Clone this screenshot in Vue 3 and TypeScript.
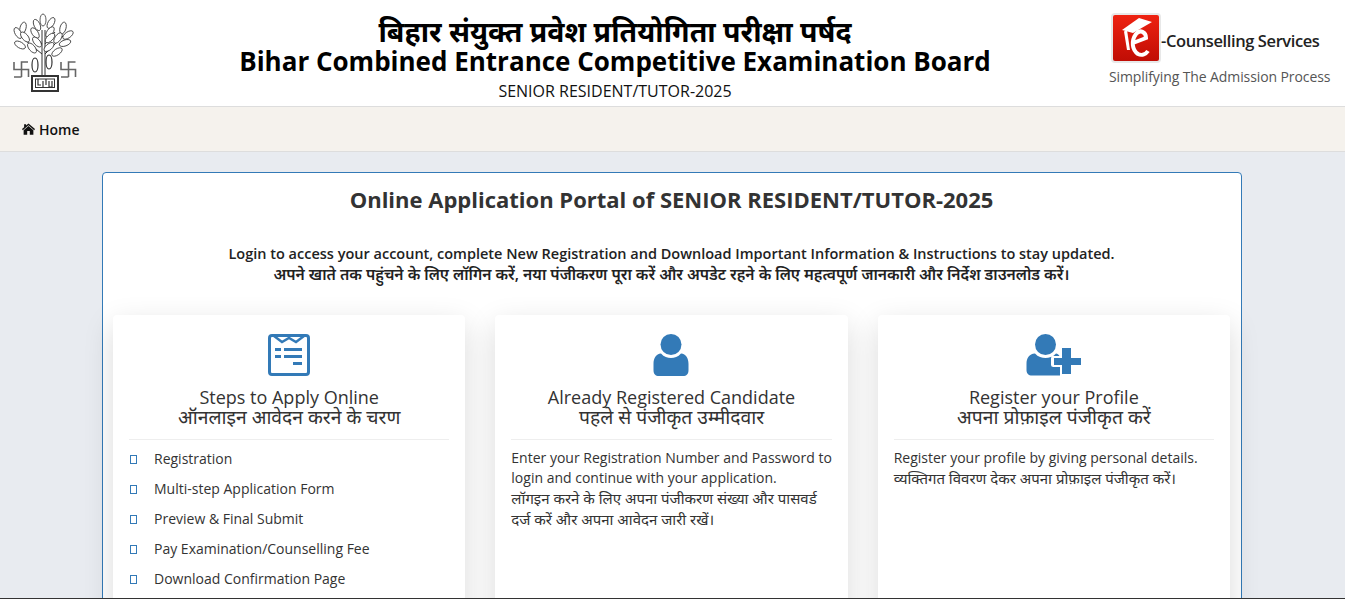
<script setup lang="ts">
interface Card {
  en: string
  hi: string
}
interface Leaf {
  x: number
  y: number
  r: number
}
const steps: string[] = [
  'Registration',
  'Multi-step Application Form',
  'Preview & Final Submit',
  'Pay Examination/Counselling Fee',
  'Download Confirmation Page',
]
const cards: Card[] = [
  { en: 'Steps to Apply Online', hi: 'ऑनलाइन आवेदन करने के चरण' },
  { en: 'Already Registered Candidate', hi: 'पहले से पंजीकृत उम्मीदवार' },
  { en: 'Register your Profile', hi: 'अपना प्रोफ़ाइल पंजीकृत करें' },
]
const leaves: Leaf[] = [
  { x: 30, y: 8, r: 0 },
  { x: 24, y: 13, r: -25 },
  { x: 38, y: 11, r: 30 },
  { x: 22, y: 21, r: -35 },
  { x: 37, y: 20, r: 35 },
  { x: 37, y: 26, r: 45 },
  { x: 24, y: 30, r: -40 },
  { x: 36, y: 35, r: 50 },
  { x: 10, y: 16, r: 15 },
  { x: 5, y: 21, r: -30 },
  { x: 12, y: 25, r: -40 },
  { x: 7, y: 33, r: -60 },
  { x: 19, y: 36, r: -40 },
  { x: 50, y: 16, r: 15 },
  { x: 55, y: 23, r: 55 },
  { x: 45, y: 26, r: 35 },
  { x: 52, y: 31, r: 70 },
  { x: 44, y: 40, r: 55 },
]
</script>

<template>
  <div class="page">
    <header class="top">
      <svg class="emblem" viewBox="0 0 64 82" width="64" height="82" fill="none" stroke="#333" stroke-width="0.8">
        <path d="M29 63V18M32 63V18M29 42L12 28M32 42L50 24M29 32L20 22M32 32L42 20" stroke-width="1" />
        <ellipse
          v-for="l in leaves"
          :key="`${l.x}-${l.y}`"
          :cx="l.x"
          :cy="l.y"
          rx="3"
          ry="6"
          fill="#fff"
          :transform="`rotate(${l.r} ${l.x} ${l.y})`"
        />
        <ellipse cx="22" cy="53" rx="3" ry="7" stroke-width="1.2" />
        <ellipse cx="36" cy="50" rx="3" ry="7" stroke-width="1.2" />
        <path d="M1 50V57.5H8.5V50H15M8.5 50V65M1 65H8.5M8.5 57.5H15.5V65" stroke-width="1.6" stroke="#666" />
        <path d="M48 50V57.5H55.5V50H62.5M55.5 50V65M48 65H55.5M55.5 57.5H62.5V65" stroke-width="1.6" stroke="#666" />
        <rect x="19" y="64" width="26" height="15" stroke="#333" stroke-width="2" />
        <rect x="22.5" y="67" width="19" height="8.5" fill="#fff" stroke-width="1" />
        <path d="M25 67V73H28M30 69V75M33 67V73M36 69V75H39V69" stroke-width="1.2" />
      </svg>
      <div class="title">
        <div class="title-hi">बिहार संयुक्त प्रवेश प्रतियोगिता परीक्षा पर्षद</div>
        <div class="title-en">Bihar Combined Entrance Competitive Examination Board</div>
        <div class="title-sub">SENIOR RESIDENT/TUTOR-2025</div>
      </div>
      <div class="brand">
        <div class="brand-row">
          <div class="brand-box">
            <svg viewBox="0 0 46 46" width="46" height="46" fill="none" stroke="#fff">
              <path d="M9 15L26 3L39 7L20 18Z" fill="#fff" stroke="none" />
              <path d="M11 16.5L14 15L17 35L14 35Z" fill="#fff" stroke="none" />
              <path d="M20 28L33 23C33 17 27 14 23 19C18 26 19 35 25 39C29 41 33 39 35 36" stroke-width="4" />
            </svg>
          </div>
          <span class="brand-name">-Counselling Services</span>
        </div>
        <div class="brand-tag">Simplifying The Admission Process</div>
      </div>
    </header>

    <nav class="nav">
      <a class="home">
        <svg class="home-ico" viewBox="0 0 16 14" width="13" height="12" fill="#111">
          <path d="M8 0.2L16 7L15 8.4L8 2.4L1 8.4L0 7L2.6 4.8V1H5V2.8Z" />
          <path d="M8 3.4L14 8.5V14H9.6V9.6H6.4V14H2V8.5Z" />
        </svg>
        Home
      </a>
    </nav>

    <main class="main">
      <section class="panel">
        <h2 class="panel-title">Online Application Portal of SENIOR RESIDENT/TUTOR-2025</h2>
        <p class="intro">
          Login to access your account, complete New Registration and Download Important Information &amp; Instructions to stay updated.<br />
          <span class="intro-hi">अपने खाते तक पहुंचने के लिए लॉगिन करें, नया पंजीकरण पूरा करें और अपडेट रहने के लिए महत्वपूर्ण जानकारी और निर्देश डाउनलोड करें।</span>
        </p>
        <div class="cards">
          <article v-for="(card, i) in cards" :key="card.en" class="card">
            <div class="icon">
              <svg v-if="i === 0" viewBox="0 0 42 42" width="42" height="42" fill="#337ab7">
                <rect x="1.5" y="1.5" width="39" height="39" rx="2.5" fill="none" stroke="#337ab7" stroke-width="3" />
                <path d="M6 2L14 8L21 4L28 8L36 2" fill="none" stroke="#337ab7" stroke-width="2.4" />
                <rect x="7" y="14" width="6" height="3" />
                <rect x="16" y="14" width="18" height="3" />
                <rect x="7" y="21" width="6" height="3" />
                <rect x="16" y="21" width="18" height="3" />
                <rect x="25" y="28" width="9" height="3" />
              </svg>
              <svg v-else-if="i === 1" viewBox="0 0 36 42" width="36" height="42" fill="#337ab7">
                <circle cx="18" cy="10.5" r="10.5" />
                <path d="M8 19.5C11 23 14.5 24 18 24C21.5 24 25 23 28 19.5C33 20 35.5 24 35.5 30V36C35.5 40 33.5 42 30 42H6C2.5 42 0.5 40 0.5 36V30C0.5 24 3 20 8 19.5Z" />
              </svg>
              <svg v-else viewBox="0 0 56 42" width="56" height="42" fill="#337ab7">
                <circle cx="19.5" cy="10.5" r="10.5" />
                <path d="M9 19.5C12 23 16 24 19.5 24C23 24 27 23 30 19.5C31.5 19.8 32.5 20.5 33.5 22H27.5A2.5 2.5 0 0 0 25 24.5V30.5A2.5 2.5 0 0 0 27.5 33H34V41.5H6C2.5 41.5 0.5 39.5 0.5 36V30C0.5 24 3 20 9 19.5Z" />
                <path d="M36 14H45V24H55V31H45V40H36V31H28V24H36Z" />
              </svg>
            </div>
            <h3 class="card-title">{{ card.en }}<br /><span class="card-hi">{{ card.hi }}</span></h3>
            <hr class="rule" />
            <ul v-if="i === 0" class="steps">
              <li v-for="s in steps" :key="s"><i class="tofu"></i><span>{{ s }}</span></li>
            </ul>
            <p v-else-if="i === 1" class="text">
              Enter your Registration Number and Password to login and continue with your application.<br />
              <span class="hi">लॉगइन करने के लिए अपना पंजीकरण संख्या और पासवर्ड दर्ज करें और अपना आवेदन जारी रखें।</span>
            </p>
            <p v-else class="text">
              Register your profile by giving personal details.<br />
              <span class="hi">व्यक्तिगत विवरण देकर अपना प्रोफ़ाइल पंजीकृत करें।</span>
            </p>
          </article>
        </div>
      </section>
    </main>
  </div>
</template>

<style>
html, body { margin: 0; height: 599px; overflow: hidden; }
</style>

<style scoped>
.page {
  height: 599px;
  overflow: hidden;
  background: #e8ebf0;
  font-family: "Open Sans", "Noto Sans", "Noto Sans Devanagari", sans-serif;
  color: #333;
  font-size: 14px;
  box-sizing: border-box;
  border-bottom: 1px solid #333;
}
.top {
  height: 106px;
  background: #fff;
  display: flex;
  align-items: flex-start;
  border-bottom: 1px solid #ddd;
}
.emblem { margin: 12px 0 0 13px; flex: none; }
.title { flex: 1; text-align: center; color: #000; padding-left: 44px; }
.title-hi { font-size: 28.5px; font-weight: 700; line-height: 30px; margin-top: 16px; }
.title-en { font-size: 26px; font-weight: 700; line-height: 30px; }
.title-sub { font-size: 16px; font-weight: 500; line-height: 22px; margin-top: 4px; color: #111; }
.brand { width: 222px; margin: 13px 14px 0 0; flex: none; }
.brand-row { display: flex; align-items: center; margin-left: 2px; }
.brand-box {
  width: 46px; height: 46px; border-radius: 4px; border: 2px solid #e8e8e8;
  background: linear-gradient(#ee2211, #c00d05);
  box-sizing: content-box;
}
.brand-name { font-size: 16.5px; font-weight: 600; color: #222; margin-top: 4px; letter-spacing: -0.4px; }
.brand-tag { font-size: 14px; color: #555; font-weight: 500; margin-top: 4px; line-height: 20px; white-space: nowrap; letter-spacing: -0.1px; }
.nav {
  height: 44px;
  background: #f5f2ed;
  border-bottom: 1px solid #ddd;
  display: flex;
  align-items: center;
  padding-left: 22px;
}
.home { font-size: 14px; font-weight: 600; color: #111; display: flex; align-items: center; gap: 4px; }
.main { padding: 20px 103px 0 102px; }
.panel {
  background: #fff;
  border: 1px solid #337ab7;
  border-radius: 4px;
  padding: 0 11px 0 10px;
  height: 500px;
}
.panel-title { margin: 11px 0 0; font-size: 22px; font-weight: 700; line-height: 30px; text-align: center; color: #333; }
.intro { margin: 30px 0 0; font-size: 14.5px; font-weight: 600; line-height: 20px; text-align: center; color: #222; }
.intro-hi { font-size: 15.6px; }
.cards { display: grid; grid-template-columns: repeat(3, 1fr); gap: 30px; margin-top: 30px; }
.card {
  background: #fff;
  border-radius: 4px;
  height: 400px;
  padding: 0 16px;
  box-shadow: 0 10px 30px rgba(0, 0, 0, 0.15);
}
.icon { height: 42px; padding-top: 19px; display: flex; justify-content: center; }
.card-title { margin: 12px 0 0; font-size: 18px; font-weight: 400; line-height: 19px; text-align: center; color: #333; }
.card-hi { font-size: 19.3px; }
.rule { border: 0; border-top: 1px solid #eee; margin: 12px 0 0; }
.steps { list-style: none; margin: 3px 0 0; padding: 0; }
.steps li { display: flex; align-items: center; height: 30px; }
.tofu { width: 5px; height: 7px; border: 1px solid #337ab7; margin-left: 1px; margin-right: 17px; margin-top: 2px; flex: none; }
.text { margin: 8px -3px 0 0; line-height: 20px; }
.hi { font-size: 15px; }
</style>
